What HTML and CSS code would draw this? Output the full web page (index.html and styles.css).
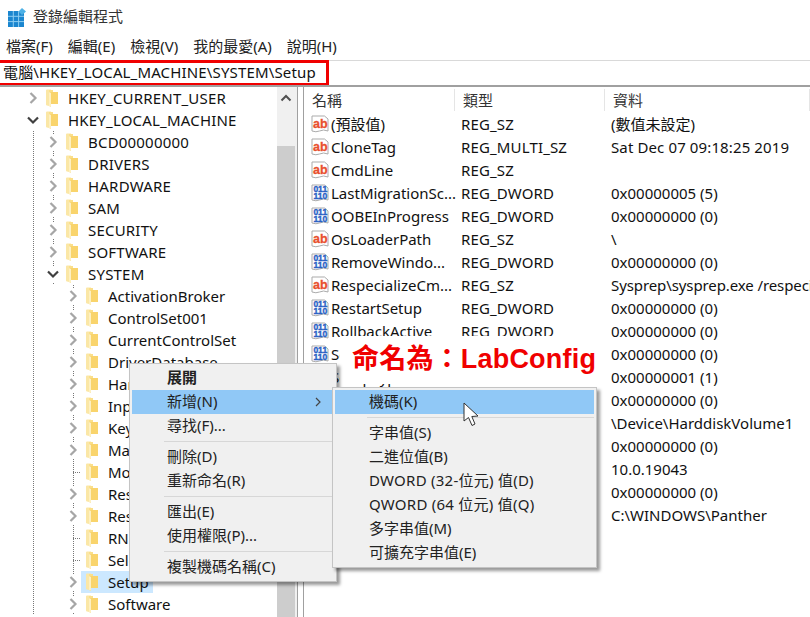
FILE: index.html
```html
<!DOCTYPE html>
<html lang="zh-Hant">
<head>
    <meta charset="UTF-8">
    <meta name="viewport" content="width=device-width, initial-scale=1.0">
    <title>登錄編輯程式</title>
    <link rel="stylesheet" href="styles.css">
</head>
<body>

<!-- shared icons -->
<svg class="defs" width="0" height="0">
    <symbol id="ico-closed" viewBox="0 0 14 16"><polyline points="4.5,3 9.5,8 4.5,13" fill="none" stroke="#a6a6a6" stroke-width="2.2"/></symbol>
    <symbol id="ico-open" viewBox="0 0 14 16"><polyline points="2,5.5 7,10.5 12,5.5" fill="none" stroke="#404040" stroke-width="2.2"/></symbol>
    <symbol id="ico-folder" viewBox="0 0 12 18">
        <path d="M0 1.5 Q0 0.5 1 0.5 H5 V17.5 L1 16.5 Q0 16.3 0 15.5 Z" fill="#fbe7a6"/>
        <path d="M3 3 H12 V15 H5 V17.5 L3 17 Z" fill="#f9d46c"/>
        <path d="M3 1 H7 V3 H3 Z" fill="#fbdf8a"/>
        <path d="M3 3 L5 4 V17.5 L3 17 Z" fill="#fdf0c2"/>
    </symbol>
    <symbol id="ico-ab" viewBox="0 0 18 18">
        <path d="M1 1 H13.5 L17 4 V16 Q12.5 14 8.5 16 Q5 17.5 1 16 Z" fill="#fff" stroke="#ababab"/>
        <text x="2" y="12.5" font-family="Liberation Sans" font-weight="700" font-size="12.5" fill="#e8502e" stroke="#e8502e" stroke-width="0.3">ab</text>
    </symbol>
    <symbol id="ico-bin" viewBox="0 0 18 18">
        <path d="M1 1 H13.5 L17 4 V16 Q12.5 14 8.5 16 Q5 17.5 1 16 Z" fill="#fff" stroke="#ababab"/>
        <text x="2.4" y="8" font-family="Liberation Sans" font-weight="700" font-size="8.5" fill="#2b62c4" stroke="#2b62c4" stroke-width="0.4">011</text>
        <text x="2.4" y="15" font-family="Liberation Sans" font-weight="700" font-size="8.5" fill="#2b62c4" stroke="#2b62c4" stroke-width="0.4">110</text>
    </symbol>
</svg>

<div class="window">
    <div class="titlebar">
        <svg class="app-icon" width="18" height="19" viewBox="0 0 18 19">
            <rect x="0" y="3" width="16" height="16" fill="#1b86cf"/>
            <path d="M5.3 3 V19 M10.6 3 V19 M0 8.3 H16 M0 13.6 H16" stroke="#8fcdf0" stroke-width="1"/>
            <path d="M14 0 L18 3.5 L14 7 L10.5 3.5 Z" fill="#4db1e6"/>
        </svg>
        <span>登錄編輯程式</span>
    </div>

    <div class="menubar">
        <span>檔案(F)</span>
        <span>編輯(E)</span>
        <span>檢視(V)</span>
        <span>我的最愛(A)</span>
        <span>說明(H)</span>
    </div>

    <div class="addressbar">
        <div class="path">電腦\HKEY_LOCAL_MACHINE\SYSTEM\Setup</div>
    </div>

    <div class="panes">
        <div class="tree-pane">
            <div class="tree">
                <div class="row lv1 caps"><svg class="chev"><use href="#ico-closed"/></svg><span class="node"><svg class="folder"><use href="#ico-folder"/></svg>HKEY_CURRENT_USER</span></div>
                <div class="row lv1 caps"><svg class="chev"><use href="#ico-open"/></svg><span class="node"><svg class="folder"><use href="#ico-folder"/></svg>HKEY_LOCAL_MACHINE</span></div>
                <div class="row lv2 caps"><svg class="chev"><use href="#ico-closed"/></svg><span class="node"><svg class="folder"><use href="#ico-folder"/></svg>BCD00000000</span></div>
                <div class="row lv2 caps"><svg class="chev"><use href="#ico-closed"/></svg><span class="node"><svg class="folder"><use href="#ico-folder"/></svg>DRIVERS</span></div>
                <div class="row lv2 caps"><svg class="chev"><use href="#ico-closed"/></svg><span class="node"><svg class="folder"><use href="#ico-folder"/></svg>HARDWARE</span></div>
                <div class="row lv2 caps"><svg class="chev"><use href="#ico-closed"/></svg><span class="node"><svg class="folder"><use href="#ico-folder"/></svg>SAM</span></div>
                <div class="row lv2 caps"><svg class="chev"><use href="#ico-closed"/></svg><span class="node"><svg class="folder"><use href="#ico-folder"/></svg>SECURITY</span></div>
                <div class="row lv2 caps"><svg class="chev"><use href="#ico-closed"/></svg><span class="node"><svg class="folder"><use href="#ico-folder"/></svg>SOFTWARE</span></div>
                <div class="row lv2 caps"><svg class="chev"><use href="#ico-open"/></svg><span class="node"><svg class="folder"><use href="#ico-folder"/></svg>SYSTEM</span></div>
                <div class="row lv3"><svg class="chev"><use href="#ico-closed"/></svg><span class="node"><svg class="folder"><use href="#ico-folder"/></svg>ActivationBroker</span></div>
                <div class="row lv3"><svg class="chev"><use href="#ico-closed"/></svg><span class="node"><svg class="folder"><use href="#ico-folder"/></svg>ControlSet001</span></div>
                <div class="row lv3"><svg class="chev"><use href="#ico-closed"/></svg><span class="node"><svg class="folder"><use href="#ico-folder"/></svg>CurrentControlSet</span></div>
                <div class="row lv3"><svg class="chev"><use href="#ico-closed"/></svg><span class="node"><svg class="folder"><use href="#ico-folder"/></svg>DriverDatabase</span></div>
                <div class="row lv3"><svg class="chev"><use href="#ico-closed"/></svg><span class="node"><svg class="folder"><use href="#ico-folder"/></svg>HardwareConfig</span></div>
                <div class="row lv3"><svg class="chev"><use href="#ico-closed"/></svg><span class="node"><svg class="folder"><use href="#ico-folder"/></svg>Input</span></div>
                <div class="row lv3"><svg class="chev"><use href="#ico-closed"/></svg><span class="node"><svg class="folder"><use href="#ico-folder"/></svg>Keyboard Layout</span></div>
                <div class="row lv3"><svg class="chev"><use href="#ico-closed"/></svg><span class="node"><svg class="folder"><use href="#ico-folder"/></svg>Maps</span></div>
                <div class="row lv3"><span class="stub"></span><span class="node"><svg class="folder"><use href="#ico-folder"/></svg>MountedDevices</span></div>
                <div class="row lv3"><svg class="chev"><use href="#ico-closed"/></svg><span class="node"><svg class="folder"><use href="#ico-folder"/></svg>ResourceManager</span></div>
                <div class="row lv3"><svg class="chev"><use href="#ico-closed"/></svg><span class="node"><svg class="folder"><use href="#ico-folder"/></svg>ResourcePolicyStore</span></div>
                <div class="row lv3"><span class="stub"></span><span class="node"><svg class="folder"><use href="#ico-folder"/></svg>RNG</span></div>
                <div class="row lv3"><span class="stub"></span><span class="node"><svg class="folder"><use href="#ico-folder"/></svg>Select</span></div>
                <div class="row lv3"><svg class="chev"><use href="#ico-closed"/></svg><span class="node selected"><svg class="folder"><use href="#ico-folder"/></svg>Setup</span></div>
                <div class="row lv3"><svg class="chev"><use href="#ico-closed"/></svg><span class="node"><svg class="folder"><use href="#ico-folder"/></svg>Software</span></div>
            </div>
            <div class="scrollbar">
                <div class="scroll-up">
                    <svg width="12" height="8" viewBox="0 0 12 8"><polyline points="1.5,6.5 6,2 10.5,6.5" fill="none" stroke="#505050" stroke-width="2"/></svg>
                </div>
                <div class="scroll-thumb"></div>
            </div>
        </div>

        <div class="list-pane">
            <div class="list-head">
                <span>名稱</span><span>類型</span><span>資料</span>
            </div>
            <div class="list-row"><span class="name"><svg class="val-icon"><use href="#ico-ab"/></svg>(預設值)</span><span class="type">REG_SZ</span><span>(數值未設定)</span></div>
            <div class="list-row"><span class="name"><svg class="val-icon"><use href="#ico-ab"/></svg>CloneTag</span><span class="type">REG_MULTI_SZ</span><span class="date">Sat Dec 07 09:18:25 2019</span></div>
            <div class="list-row"><span class="name"><svg class="val-icon"><use href="#ico-ab"/></svg>CmdLine</span><span class="type">REG_SZ</span><span></span></div>
            <div class="list-row"><span class="name"><svg class="val-icon"><use href="#ico-bin"/></svg>LastMigrationSc...</span><span class="type">REG_DWORD</span><span>0x00000005 (5)</span></div>
            <div class="list-row"><span class="name"><svg class="val-icon"><use href="#ico-bin"/></svg>OOBEInProgress</span><span class="type">REG_DWORD</span><span>0x00000000 (0)</span></div>
            <div class="list-row"><span class="name"><svg class="val-icon"><use href="#ico-ab"/></svg>OsLoaderPath</span><span class="type">REG_SZ</span><span>\</span></div>
            <div class="list-row"><span class="name"><svg class="val-icon"><use href="#ico-bin"/></svg>RemoveWindo...</span><span class="type">REG_DWORD</span><span>0x00000000 (0)</span></div>
            <div class="list-row"><span class="name"><svg class="val-icon"><use href="#ico-ab"/></svg>RespecializeCm...</span><span class="type">REG_SZ</span><span class="tight">Sysprep\sysprep.exe /respecialize /quiet</span></div>
            <div class="list-row"><span class="name"><svg class="val-icon"><use href="#ico-bin"/></svg>RestartSetup</span><span class="type">REG_DWORD</span><span>0x00000000 (0)</span></div>
            <div class="list-row"><span class="name"><svg class="val-icon"><use href="#ico-bin"/></svg>RollbackActive</span><span class="type">REG_DWORD</span><span>0x00000000 (0)</span></div>
            <div class="list-row"><span class="name"><svg class="val-icon"><use href="#ico-bin"/></svg>SetupPhase</span><span></span><span>0x00000000 (0)</span></div>
            <div class="list-row"><span class="name"><svg class="val-icon"><use href="#ico-bin"/></svg>SetupType</span><span></span><span>0x00000001 (1)</span></div>
            <div class="list-row"><span class="name"></span><span></span><span>0x00000000 (0)</span></div>
            <div class="list-row"><span class="name"></span><span></span><span>\Device\HarddiskVolume1</span></div>
            <div class="list-row"><span class="name"></span><span></span><span>0x00000000 (0)</span></div>
            <div class="list-row"><span class="name"></span><span></span><span>10.0.19043</span></div>
            <div class="list-row"><span class="name"></span><span></span><span>0x00000000 (0)</span></div>
            <div class="list-row"><span class="name"></span><span></span><span>C:\WINDOWS\Panther</span></div>
        </div>
    </div>

    <!-- annotation pasted over the list -->
    <div class="note">命名為：LabConfig</div>

    <div class="menu main-menu">
        <div class="item bold">展開</div>
        <div class="item active">新增(N)<svg class="arrow" width="8" height="10" viewBox="0 0 8 10"><polyline points="2,1 6,5 2,9" fill="none" stroke="#444" stroke-width="1.2"/></svg></div>
        <div class="item">尋找(F)...</div>
        <div class="sep"></div>
        <div class="item">刪除(D)</div>
        <div class="item">重新命名(R)</div>
        <div class="sep"></div>
        <div class="item">匯出(E)</div>
        <div class="item">使用權限(P)...</div>
        <div class="sep"></div>
        <div class="item">複製機碼名稱(C)</div>
    </div>

    <div class="menu sub-menu">
        <div class="item active">機碼(K)</div>
        <div class="sep"></div>
        <div class="item">字串值(S)</div>
        <div class="item">二進位值(B)</div>
        <div class="item wide">DWORD (32-位元) 值(D)</div>
        <div class="item wide">QWORD (64 位元) 值(Q)</div>
        <div class="item">多字串值(M)</div>
        <div class="item">可擴充字串值(E)</div>
    </div>

    <svg class="cursor" width="17" height="26" viewBox="0 0 17 26">
        <path d="M1 1 V19 L5.5 15.5 L9 23.5 L12 22 L8.8 14.5 L15 14 Z" fill="#fff" stroke="#333" stroke-width="1"/>
    </svg>
</div>

</body>
</html>
```

FILE: styles.css
```css
html, body {
    margin: 0;
    padding: 0;
    background: #fff;
}
body {
    font-family: "Noto Sans", "Noto Sans CJK TC", sans-serif;
    font-size: 15px;
    color: #111;
}
.defs {
    position: absolute;
}
.window {
    position: relative;
    width: 810px;
    height: 617px;
    overflow: hidden;
    white-space: nowrap;
}

/* top bars */
.titlebar {
    display: flex;
    align-items: center;
    gap: 7px;
    box-sizing: border-box;
    height: 34px;
    padding: 0 0 3px 8px;
    color: #333;
}
.app-icon {
    margin-top: 4px;
}
.menubar {
    display: flex;
    align-items: center;
    gap: 15px;
    box-sizing: border-box;
    height: 26px;
    padding: 0 0 3px 6px;
    color: #222;
}
.addressbar {
    height: 25px;
    border-top: 1px solid #d9d9d9;
    box-sizing: border-box;
}
.path {
    display: flex;
    align-items: center;
    box-sizing: border-box;
    width: 329px;
    height: 26px;
    margin-top: -1px;
    padding: 0 0 3px 3px;
    border: 3px solid #f00000;
    border-left: none;
    letter-spacing: 0.15px;
}

/* panes */
.panes {
    display: grid;
    grid-template-columns: 303px 1fr;
    height: 532px;
    border-top: 2px solid #a0a0a0;
    box-sizing: border-box;
}
.tree-pane {
    display: flex;
    overflow: hidden;
}
.tree {
    width: 277px;
    overflow: hidden;
}
.row {
    display: flex;
    align-items: center;
    height: 22px;
    background-repeat: no-repeat;
}
.caps {
    letter-spacing: 0.2px;
}
.lv1 { padding-left: 26px; }
.lv2 {
    padding-left: 46px;
    background-image: repeating-linear-gradient(#777 0 1px, transparent 1px 2px), repeating-linear-gradient(#777 0 1px, transparent 1px 2px);
    background-size: 1px 100%, 1px 100%;
    background-position: 33px 0, 53px 0;
}
.lv3 {
    padding-left: 66px;
    background-image: repeating-linear-gradient(#777 0 1px, transparent 1px 2px), repeating-linear-gradient(#777 0 1px, transparent 1px 2px);
    background-size: 1px 100%, 1px 100%;
    background-position: 33px 0, 73px 0;
}
.chev {
    flex: none;
    width: 14px;
    height: 16px;
    margin-right: 1px;
    background: #fff;
}
.stub {
    flex: none;
    width: 8px;
    height: 1px;
    margin-left: 7px;
    background: repeating-linear-gradient(90deg, #777 0 1px, transparent 1px 2px);
}
.node {
    display: flex;
    align-items: center;
    height: 22px;
    padding: 0 4px 0 5px;
}
.selected {
    background: #cce8ff;
}
.folder {
    flex: none;
    width: 12px;
    height: 18px;
    margin-right: 10px;
}
.scrollbar {
    flex: none;
    width: 18px;
    padding-right: 2px;
    margin-right: 5px;
    background: #f0f0f0;
    border-right: 1px solid #a0a0a0;
}
.scroll-up {
    display: flex;
    justify-content: center;
    align-items: center;
    height: 22px;
}
.scroll-thumb {
    height: 480px;
    margin-top: 37px;
    background: #cdcdcd;
}

/* value list */
.list-pane {
    border-left: 1px solid #a0a0a0;
    overflow: hidden;
}
.list-head {
    display: grid;
    grid-template-columns: 151px 150px 1fr;
    height: 25px;
    align-items: center;
    color: #333;
}
.list-head span {
    height: 22px;
    line-height: 22px;
    padding-left: 8px;
    border-right: 1px solid #e5e5e5;
}
.list-row {
    display: grid;
    grid-template-columns: 157px 150px 1fr;
    align-items: center;
    height: 23px;
}
.type {
    letter-spacing: 0.15px;
}
.date {
    letter-spacing: 0.12px;
}
.tight {
    letter-spacing: -0.1px;
}
.name {
    display: flex;
    align-items: center;
    padding-left: 7px;
    overflow: hidden;
}
.val-icon {
    flex: none;
    width: 18px;
    height: 18px;
    margin-right: 2px;
}

/* annotation */
.note {
    position: absolute;
    left: 340px;
    top: 336px;
    width: 251px;
    height: 48px;
    padding-left: 12px;
    line-height: 47px;
    background: #fff;
    color: #f00000;
    font-family: "Liberation Sans", "Noto Sans CJK TC", sans-serif;
    font-weight: 700;
    font-size: 27px;
    letter-spacing: 0.2px;
}

/* context menus */
.menu {
    position: absolute;
    box-sizing: border-box;
    padding: 2px;
    background: #f0f0f0;
    border: 1px solid #c4c4c4;
    box-shadow: 3px 3px 3px rgba(0, 0, 0, 0.4);
    color: #222;
}
.main-menu {
    left: 129px;
    top: 363px;
    width: 208px;
    height: 219px;
}
.sub-menu {
    left: 332px;
    top: 387px;
    width: 265px;
    height: 181px;
}
.item {
    position: relative;
    display: flex;
    align-items: center;
    box-sizing: border-box;
    height: 24px;
    padding: 0 0 3px 35px;
}
.sub-menu .item {
    padding-left: 34px;
}
.wide {
    letter-spacing: 0.25px;
}
.bold {
    font-weight: 700;
}
.active {
    background: #90c8f6;
}
.arrow {
    position: absolute;
    right: 12px;
    top: 7px;
}
.sep {
    height: 1px;
    margin: 3px 0 3px 32px;
    background: #d7d7d7;
}
.cursor {
    position: absolute;
    left: 463px;
    top: 402px;
}
```
